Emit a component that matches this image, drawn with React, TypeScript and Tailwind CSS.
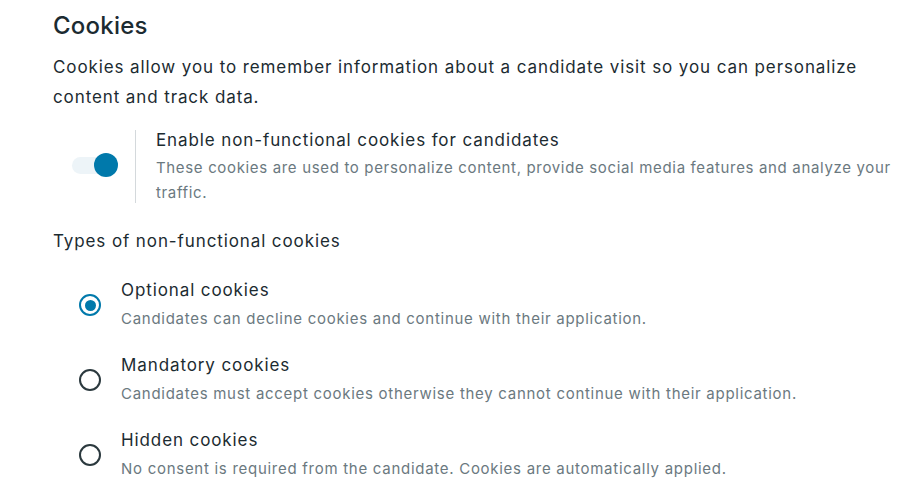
import React from "react";

const options = [
  {
    title: "Optional cookies",
    desc: "Candidates can decline cookies and continue with their application.",
    checked: true,
  },
  {
    title: "Mandatory cookies",
    desc: "Candidates must accept cookies otherwise they cannot continue with their application.",
    checked: false,
  },
  {
    title: "Hidden cookies",
    desc: "No consent is required from the candidate. Cookies are automatically applied.",
    checked: false,
  },
];

const App = () => {
  return (
    <main className="min-h-screen bg-white pl-[53px] pt-[10px] font-['Inter',sans-serif] tracking-[0.056em] text-[#1c2b31]">
      <h1 className="text-[24px] font-medium leading-[32px] tracking-[0.01em]">Cookies</h1>
      <p className="mt-[10px] whitespace-nowrap text-[17px] leading-[30px]">
        Cookies allow you to remember information about a candidate visit so
        you can personalize
        <br />
        content and track data.
      </p>

      <div className="mt-[16px] flex items-stretch">
        <div className="flex w-[82px] items-center pl-[19px] pb-[2px]">
          <div className="relative h-[17px] w-[42px] rounded-full bg-[#edf4f8]">
            <span className="absolute -right-[4px] -top-[4px] h-[24px] w-[24px] rounded-full bg-[#0079ab]" />
          </div>
        </div>
        <div className="mt-[2px] mb-[2px] w-px bg-[#d4d9dc]" />
        <div className="pl-[20px]">
          <div className="text-[17px] leading-[25px]">
            Enable non-functional cookies for candidates
          </div>
          <div className="mt-[2px] whitespace-nowrap text-[15px] leading-[25px] tracking-[0.044em] text-[#6b797f]">
            These cookies are used to personalize content, provide social media
            features and analyze your
            <br />
            traffic.
          </div>
        </div>
      </div>

      <div className="mt-[24px] text-[17px] leading-[25px]">
        Types of non-functional cookies
      </div>

      <div className="mt-[24px] flex flex-col gap-[23px]">
        {options.map((o) => (
          <div key={o.title} className="flex items-center">
            <div className="flex w-[68px] justify-center pl-[6px] pt-[2px]">
              {o.checked ? (
                <span className="flex h-[22px] w-[22px] items-center justify-center rounded-full border-[2.5px] border-[#0079ab]">
                  <span className="h-[11px] w-[11px] rounded-full bg-[#0079ab]" />
                </span>
              ) : (
                <span className="h-[22px] w-[22px] rounded-full border-[2.5px] border-[#2b393e]" />
              )}
            </div>
            <div>
              <div className="text-[17px] leading-[25px]">{o.title}</div>
              <div className="mt-[5px] whitespace-nowrap text-[15px] leading-[22px] tracking-[0.048em] text-[#6b797f]">
                {o.desc}
              </div>
            </div>
          </div>
        ))}
      </div>
    </main>
  );
};

export default App;
